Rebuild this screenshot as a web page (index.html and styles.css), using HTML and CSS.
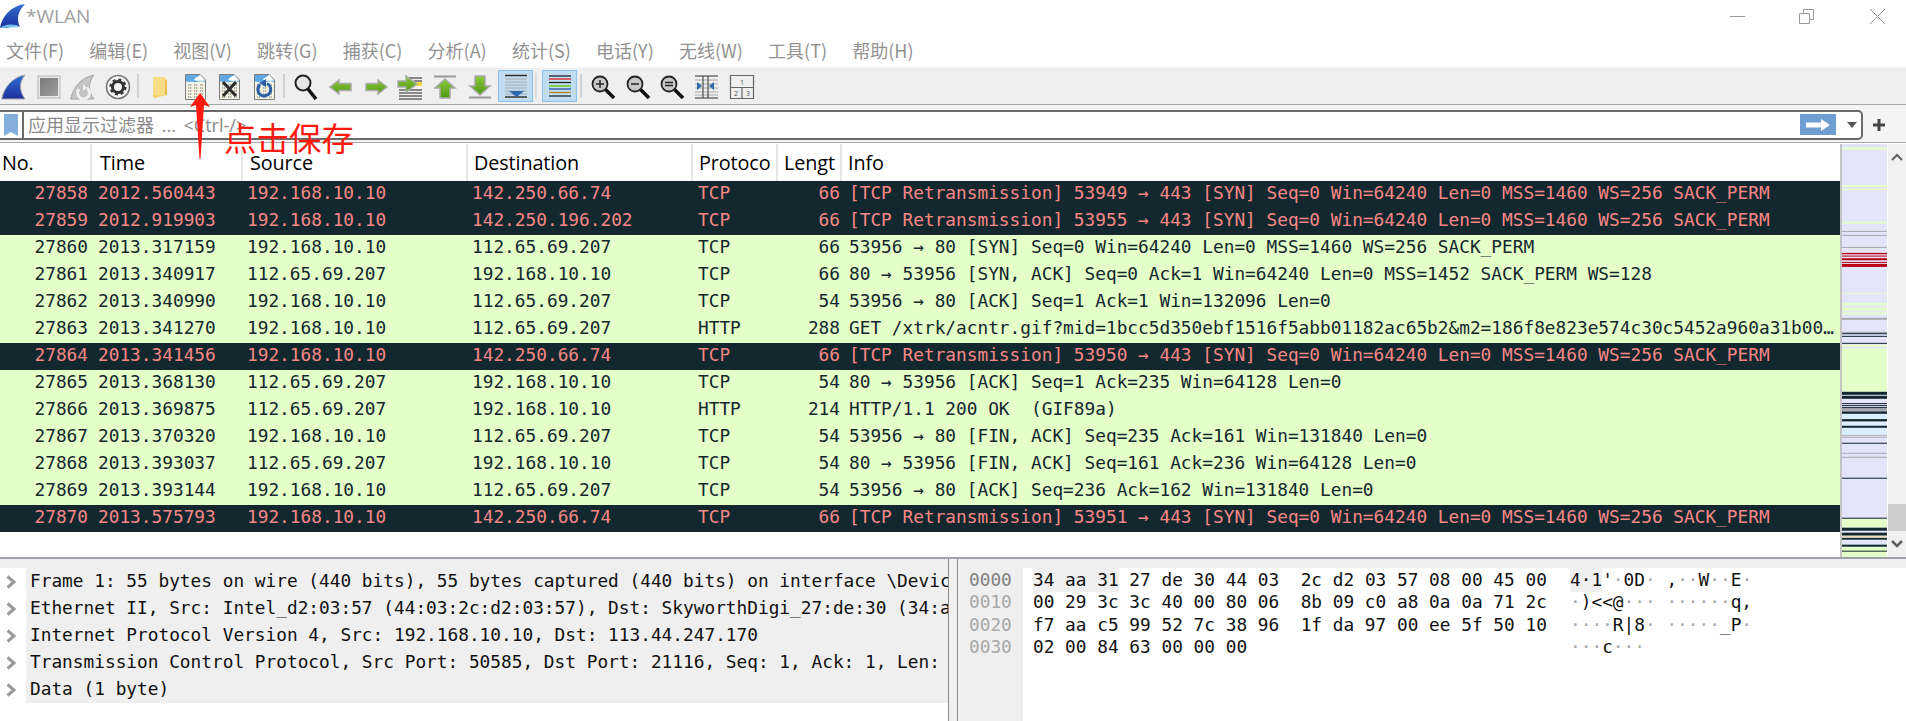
FILE: index.html
```html
<!DOCTYPE html>
<html lang="zh">
<head>
<meta charset="utf-8">
<title>*WLAN</title>
<link rel="stylesheet" href="styles.css">
</head>
<body>
<svg class="defs" width="0" height="0" aria-hidden="true">
  <defs>
    <linearGradient id="finblue" x1="0" y1="0" x2="0" y2="1"><stop offset="0" stop-color="#2f6fd0"/><stop offset="1" stop-color="#1d2f9e"/></linearGradient>
    <linearGradient id="stopg" x1="0" y1="0" x2="1" y2="1"><stop offset="0" stop-color="#7c7c7c"/><stop offset="1" stop-color="#9c9c9c"/></linearGradient>
    <linearGradient id="grn" x1="0" y1="0" x2="0" y2="1"><stop offset="0" stop-color="#8cc63f"/><stop offset="1" stop-color="#4f9a0e"/></linearGradient>
    <symbol id="doc" viewBox="0 0 26 26">
      <path d="M3.5 .5H18L23.5 6V25.500H3.500Z" fill="#f4f3e4" stroke="#7d7d7d"/>
      <path d="M4 1H17.500L23 6.500V8C18 6 15 9 12 8C9 7 6 9 4 7Z" fill="#5fa8e6"/>
      <path d="M12 6C13.500 3 16 3 18 1L23 6.500C19 7 15 7 12 6Z" fill="#fff"/>
      <path d="M6 11h4M12 11h4M18 11h3M6 14h4M12 14h4M18 14h3M6 17h4M12 17h4M18 17h3M6 20h4M12 20h4M18 20h3M6 23h4M12 23h4M18 23h3" stroke="#9a9a90" stroke-width="1.500" stroke-dasharray="1.300 .7"/>
    </symbol>
  </defs>
</svg>
<div class="app">
  <header class="titlebar">
    <svg class="appicon" viewBox="0 0 26 24"><path d="M25 0C11 2 2 12 0 24H8C11 21 16 20 20 23C16 15 18 7 25 0Z" fill="url(#finblue)"/><path d="M0 24C5 20 14 19 20 23Z" fill="#79c4ef"/></svg>
    <span class="wintitle">*WLAN</span>
    <span class="winctl">
      <svg class="ctl ctl-min" viewBox="0 0 15 15"><path d="M0 7.500H15" stroke="#999"/></svg>
      <svg class="ctl ctl-max" viewBox="0 0 15 15"><path d="M.5 4.500H10.500V14.500H.5ZM4.500 4V.5H14.500V10.500H11" fill="none" stroke="#999"/></svg>
      <svg class="ctl ctl-close" viewBox="0 0 15 15"><path d="M0 0L15 15M15 0L0 15" stroke="#999"/></svg>
    </span>
  </header>
  <nav class="menubar">
    <span>文件(F)</span><span>编辑(E)</span><span>视图(V)</span><span>跳转(G)</span><span>捕获(C)</span><span>分析(A)</span><span>统计(S)</span><span>电话(Y)</span><span>无线(W)</span><span>工具(T)</span><span>帮助(H)</span>
  </nav>
  <div class="toolbar">
    <svg class="ico" viewBox="0 0 26 26"><path d="M24 1C12 3 3 13 .7 25H24C18 17 18 8 24 1Z" fill="url(#finblue)" stroke="#a8a8a8"/></svg>
    <svg class="ico" viewBox="0 0 26 26"><rect x="2" y="2" width="22" height="22" fill="#e9e9e9" stroke="#b5b5b5"/><rect x="4" y="4" width="18" height="18" fill="url(#stopg)"/></svg>
    <svg class="ico" viewBox="0 0 26 26"><path d="M24 1C12 3 3 13 .7 25H24C18 17 18 8 24 1Z" fill="#c4c4c4" stroke="#a8a8a8"/><path d="M9 15A6 6 0 1 0 17 14" fill="none" stroke="#f1f1f1" stroke-width="3"/><path d="M13 10V17L17 14Z" fill="#f1f1f1"/></svg>
    <svg class="ico" viewBox="0 0 26 26"><circle cx="13" cy="13" r="11.500" fill="#f4f4f4" stroke="#777" stroke-width="1.600"/><circle cx="13" cy="13" r="5.500" fill="none" stroke="#333" stroke-width="3"/><circle cx="13" cy="13" r="7.500" fill="none" stroke="#333" stroke-width="2.200" stroke-dasharray="3 2.900"/></svg>
    <i class="sep"></i>
    <svg class="ico" viewBox="0 0 26 26"><path d="M6 3H17L20 6V21L7 24L6 22Z" fill="#f3d06a"/><path d="M6 3H18V21H6Z" fill="#f8dc85"/><path d="M18 6L20 7V21H18Z" fill="#e8bb4e"/></svg>
    <svg class="ico" viewBox="0 0 26 26"><use href="#doc"/></svg>
    <svg class="ico" viewBox="0 0 26 26"><use href="#doc"/><path d="M7 8L20 22M20 8L7 22" stroke="#2b2b2b" stroke-width="3"/></svg>
    <svg class="ico" viewBox="0 0 26 26"><use href="#doc"/><path d="M9 10.500A6.500 6.500 0 1 0 16 9.500" fill="none" stroke="#2a5fa8" stroke-width="3"/><path d="M15 5V13L8 9Z" fill="#2a5fa8"/></svg>
    <i class="sep"></i>
    <svg class="ico" viewBox="0 0 26 26"><path d="M15 15L23 25" stroke="#111" stroke-width="3.500"/><circle cx="10" cy="9" r="7.500" fill="#e5e5e5" stroke="#222" stroke-width="2"/></svg>
    <svg class="ico" viewBox="0 0 26 26"><path d="M2 13L11 6V9.500H23V16.500H11V20Z" fill="url(#grn)" stroke="#aaa" stroke-width="1.500"/></svg>
    <svg class="ico" viewBox="0 0 26 26"><path d="M24 13L15 6V9.500H3V16.500H15V20Z" fill="url(#grn)" stroke="#aaa" stroke-width="1.500"/></svg>
    <svg class="ico" viewBox="0 0 26 26"><path d="M12 4H25M17 7H25" stroke="#222" stroke-width="1.200"/><rect x="16" y="8" width="9" height="4" fill="#f5dc3c"/><path d="M2 16H25M2 19H25M2 22H25M2 25H25" stroke="#222" stroke-width="1.200"/><path d="M1 7H9V2L20 10L9 18V13H1Z" fill="url(#grn)" stroke="#aaa" stroke-width="1.500"/></svg>
    <svg class="ico" viewBox="0 0 26 26"><path d="M2 2.500H24" stroke="#999" stroke-width="2"/><path d="M13 5L23 14H18V24H8V14H3Z" fill="url(#grn)" stroke="#aaa" stroke-width="1.500"/></svg>
    <svg class="ico" viewBox="0 0 26 26"><path d="M2 23.500H24" stroke="#999" stroke-width="2"/><path d="M13 21L23 12H18V2H8V12H3Z" fill="url(#grn)" stroke="#aaa" stroke-width="1.500"/></svg>
    <span class="tbtn tbtn-scroll">
      <svg class="btnico" viewBox="0 0 24 24"><path d="M1 1.500H23M1 23H23" stroke="#333" stroke-width="1.300"/><path d="M1 5H23M1 8H23M1 11H23M1 14H23M1 17H23M1 20H23" stroke="#aaa"/><path d="M5 17H20L12.500 23Z" fill="#2f68ad"/></svg>
    </span>
    <i class="sep sep-a"></i>
    <span class="tbtn tbtn-color">
      <svg class="btnico" viewBox="0 0 24 24"><path d="M1 2H23" stroke="#222" stroke-width="1.300"/><path d="M1 5H23" stroke="#e02020" stroke-width="1.300"/><path d="M1 8.500H23" stroke="#222" stroke-width="1.300"/><path d="M1 12H23" stroke="#60c000" stroke-width="1.300"/><path d="M1 15H23" stroke="#2a4fa0" stroke-width="1.300"/><path d="M1 18.500H23" stroke="#b8860b" stroke-width="1.300"/><path d="M1 22H23" stroke="#222" stroke-width="1.300"/></svg>
    </span>
    <i class="sep sep-b"></i>
    <svg class="ico" viewBox="0 0 26 26"><path d="M15 15L24 24" stroke="#111" stroke-width="3.500"/><circle cx="10" cy="10" r="7.500" fill="#c8c8c8" stroke="#222" stroke-width="1.800"/><path d="M6 10H14M10 6V14" stroke="#222" stroke-width="1.500"/></svg>
    <svg class="ico" viewBox="0 0 26 26"><path d="M15 15L24 24" stroke="#111" stroke-width="3.500"/><circle cx="10" cy="10" r="7.500" fill="#c8c8c8" stroke="#222" stroke-width="1.800"/><path d="M6 10H14" stroke="#222" stroke-width="1.500"/></svg>
    <svg class="ico" viewBox="0 0 26 26"><path d="M15 15L24 24" stroke="#111" stroke-width="3.500"/><circle cx="10" cy="10" r="7.500" fill="#c8c8c8" stroke="#222" stroke-width="1.800"/><path d="M6 8.500H14M6 11.500H14" stroke="#222" stroke-width="1.500"/></svg>
    <svg class="ico" viewBox="0 0 26 26"><path d="M1 2H24M1 24H24" stroke="#333" stroke-width="1.200"/><path d="M1 6H24M1 10H24M1 14H24M1 18H24M1 21H24" stroke="#aaa"/><path d="M9 2V24M14 2V24" stroke="#333"/><path d="M3 8L8 12L3 16ZM20 8L15 12L20 16Z" fill="#2f68ad"/></svg>
    <svg class="ico" viewBox="0 0 26 26"><path d="M1.500 1.500H24.500V24.500H1.500ZM1.500 13.500H24.500M13 13.500V24.500" fill="none" stroke="#666" stroke-width="1.200"/><text class="paneno" x="13" y="10.500">1</text><text class="paneno" x="7" y="22">2</text><text class="paneno" x="19" y="22">3</text></svg>
  </div>
  <div class="filterbar">
    <div class="filterbox">
      <span class="bookmark"><svg viewBox="0 0 14 22" width="14" height="22"><path d="M0 0H14V22L7 18L0 22Z" fill="#84aedb"/></svg></span>
      <span class="placeholder">应用显示过滤器 ... &lt;Ctrl-/&gt;</span>
      <span class="applybtn"><svg viewBox="0 0 24 12" width="24" height="12"><path d="M0 3.500H15V0L24 6L15 12V8.500H0Z" fill="#fff"/></svg></span>
      <span class="caret"></span>
    </div>
    <svg class="plus" viewBox="0 0 14 14"><path d="M7 1V13M1 7H13" stroke="#444" stroke-width="3"/></svg>
  </div>
  <main class="packets">
    <div class="list">
      <div class="row head"><span class="c-no">No.</span><span class="c-time">Time</span><span class="c-src">Source</span><span class="c-dst">Destination</span><span class="c-proto">Protoco</span><span class="c-len">Lengt</span><span class="c-info">Info</span></div>
      <div class="row bad"><span class="c-no">27858</span><span class="c-time">2012.560443</span><span class="c-src">192.168.10.10</span><span class="c-dst">142.250.66.74</span><span class="c-proto">TCP</span><span class="c-len">66</span><span class="c-info">[TCP Retransmission] 53949 → 443 [SYN] Seq=0 Win=64240 Len=0 MSS=1460 WS=256 SACK_PERM</span></div>
      <div class="row bad"><span class="c-no">27859</span><span class="c-time">2012.919903</span><span class="c-src">192.168.10.10</span><span class="c-dst">142.250.196.202</span><span class="c-proto">TCP</span><span class="c-len">66</span><span class="c-info">[TCP Retransmission] 53955 → 443 [SYN] Seq=0 Win=64240 Len=0 MSS=1460 WS=256 SACK_PERM</span></div>
      <div class="row ok"><span class="c-no">27860</span><span class="c-time">2013.317159</span><span class="c-src">192.168.10.10</span><span class="c-dst">112.65.69.207</span><span class="c-proto">TCP</span><span class="c-len">66</span><span class="c-info">53956 → 80 [SYN] Seq=0 Win=64240 Len=0 MSS=1460 WS=256 SACK_PERM</span></div>
      <div class="row ok"><span class="c-no">27861</span><span class="c-time">2013.340917</span><span class="c-src">112.65.69.207</span><span class="c-dst">192.168.10.10</span><span class="c-proto">TCP</span><span class="c-len">66</span><span class="c-info">80 → 53956 [SYN, ACK] Seq=0 Ack=1 Win=64240 Len=0 MSS=1452 SACK_PERM WS=128</span></div>
      <div class="row ok"><span class="c-no">27862</span><span class="c-time">2013.340990</span><span class="c-src">192.168.10.10</span><span class="c-dst">112.65.69.207</span><span class="c-proto">TCP</span><span class="c-len">54</span><span class="c-info">53956 → 80 [ACK] Seq=1 Ack=1 Win=132096 Len=0</span></div>
      <div class="row ok"><span class="c-no">27863</span><span class="c-time">2013.341270</span><span class="c-src">192.168.10.10</span><span class="c-dst">112.65.69.207</span><span class="c-proto">HTTP</span><span class="c-len">288</span><span class="c-info">GET /xtrk/acntr.gif?mid=1bcc5d350ebf1516f5abb01182ac65b2&amp;m2=186f8e823e574c30c5452a960a31b00…</span></div>
      <div class="row bad"><span class="c-no">27864</span><span class="c-time">2013.341456</span><span class="c-src">192.168.10.10</span><span class="c-dst">142.250.66.74</span><span class="c-proto">TCP</span><span class="c-len">66</span><span class="c-info">[TCP Retransmission] 53950 → 443 [SYN] Seq=0 Win=64240 Len=0 MSS=1460 WS=256 SACK_PERM</span></div>
      <div class="row ok"><span class="c-no">27865</span><span class="c-time">2013.368130</span><span class="c-src">112.65.69.207</span><span class="c-dst">192.168.10.10</span><span class="c-proto">TCP</span><span class="c-len">54</span><span class="c-info">80 → 53956 [ACK] Seq=1 Ack=235 Win=64128 Len=0</span></div>
      <div class="row ok"><span class="c-no">27866</span><span class="c-time">2013.369875</span><span class="c-src">112.65.69.207</span><span class="c-dst">192.168.10.10</span><span class="c-proto">HTTP</span><span class="c-len">214</span><span class="c-info">HTTP/1.1 200 OK  (GIF89a)</span></div>
      <div class="row ok"><span class="c-no">27867</span><span class="c-time">2013.370320</span><span class="c-src">192.168.10.10</span><span class="c-dst">112.65.69.207</span><span class="c-proto">TCP</span><span class="c-len">54</span><span class="c-info">53956 → 80 [FIN, ACK] Seq=235 Ack=161 Win=131840 Len=0</span></div>
      <div class="row ok"><span class="c-no">27868</span><span class="c-time">2013.393037</span><span class="c-src">112.65.69.207</span><span class="c-dst">192.168.10.10</span><span class="c-proto">TCP</span><span class="c-len">54</span><span class="c-info">80 → 53956 [FIN, ACK] Seq=161 Ack=236 Win=64128 Len=0</span></div>
      <div class="row ok"><span class="c-no">27869</span><span class="c-time">2013.393144</span><span class="c-src">192.168.10.10</span><span class="c-dst">112.65.69.207</span><span class="c-proto">TCP</span><span class="c-len">54</span><span class="c-info">53956 → 80 [ACK] Seq=236 Ack=162 Win=131840 Len=0</span></div>
      <div class="row bad"><span class="c-no">27870</span><span class="c-time">2013.575793</span><span class="c-src">192.168.10.10</span><span class="c-dst">142.250.66.74</span><span class="c-proto">TCP</span><span class="c-len">66</span><span class="c-info">[TCP Retransmission] 53951 → 443 [SYN] Seq=0 Win=64240 Len=0 MSS=1460 WS=256 SACK_PERM</span></div>
    </div>
    <svg class="minimap" viewBox="0 12 136 1240" preserveAspectRatio="none">
      <rect y="12" width="136" height="1240" fill="#e4e4fb"/>
      <g fill="#e4ffc7"><rect y="22" width="136" height="7"/><rect y="135" width="136" height="6"/><rect y="147" width="136" height="3"/><rect y="245" width="136" height="6"/><rect y="459" width="136" height="3"/><rect y="489" width="136" height="8"/><rect y="503" width="136" height="10"/><rect y="518" width="136" height="6"/><rect y="615" width="136" height="6"/><rect y="626" width="136" height="130"/><rect y="1137" width="136" height="27"/><rect y="1221" width="136" height="31"/></g>
      <g fill="#a8a8b0"><rect y="273" width="136" height="3"/><rect y="285" width="136" height="3"/><rect y="321" width="136" height="3"/><rect y="534" width="136" height="6"/><rect y="576" width="136" height="4"/><rect y="805" width="136" height="10"/><rect y="844" width="136" height="3"/><rect y="885" width="136" height="3"/><rect y="891" width="136" height="3"/><rect y="939" width="136" height="3"/><rect y="951" width="136" height="3"/></g>
      <g fill="#b80010"><rect y="339" width="136" height="4"/><rect y="347" width="136" height="3"/><rect y="355" width="136" height="6"/><rect y="366" width="136" height="3"/><rect y="372" width="136" height="9"/></g>
      <g fill="#daeeff"><rect y="822" width="136" height="16"/><rect y="847" width="136" height="11"/><rect y="864" width="136" height="21"/></g>
      <g fill="#12272e"><rect y="580" width="136" height="3"/><rect y="588" width="136" height="3"/><rect y="609" width="136" height="3"/><rect y="756" width="136" height="9"/><rect y="768" width="136" height="9"/><rect y="790" width="136" height="3"/><rect y="796" width="136" height="3"/><rect y="802" width="136" height="3"/><rect y="815" width="136" height="7"/><rect y="838" width="136" height="6"/><rect y="858" width="136" height="6"/><rect y="909" width="136" height="3"/><rect y="1014" width="136" height="3"/><rect y="1134" width="136" height="3"/><rect y="1164" width="136" height="9"/><rect y="1179" width="136" height="9"/><rect y="1194" width="136" height="6"/><rect y="1215" width="136" height="6"/><rect y="1233" width="136" height="3"/></g>
      <rect y="1188" width="136" height="6" fill="#e8dcc0"/>
    </svg>
    <div class="vscroll">
      <svg class="sarrow" viewBox="0 0 18 10"><path d="M4 8L9 3L14 8" fill="none" stroke="#606060" stroke-width="2"/></svg>
      <span class="strack"><span class="thumb"></span></span>
      <svg class="sarrow" viewBox="0 0 18 10"><path d="M4 2L9 7L14 2" fill="none" stroke="#606060" stroke-width="2.500"/></svg>
    </div>
  </main>
  <section class="bottom">
    <div class="details">
      <div class="dline"><svg class="chev" viewBox="0 0 10 14"><path d="M1.500 1.500L8 7L1.500 12.500" fill="none" stroke="#9a9a9a" stroke-width="3"/></svg><span class="dtext">Frame 1: 55 bytes on wire (440 bits), 55 bytes captured (440 bits) on interface \Devic</span></div>
      <div class="dline"><svg class="chev" viewBox="0 0 10 14"><path d="M1.500 1.500L8 7L1.500 12.500" fill="none" stroke="#9a9a9a" stroke-width="3"/></svg><span class="dtext">Ethernet II, Src: Intel_d2:03:57 (44:03:2c:d2:03:57), Dst: SkyworthDigi_27:de:30 (34:a</span></div>
      <div class="dline"><svg class="chev" viewBox="0 0 10 14"><path d="M1.500 1.500L8 7L1.500 12.500" fill="none" stroke="#9a9a9a" stroke-width="3"/></svg><span class="dtext">Internet Protocol Version 4, Src: 192.168.10.10, Dst: 113.44.247.170</span></div>
      <div class="dline"><svg class="chev" viewBox="0 0 10 14"><path d="M1.500 1.500L8 7L1.500 12.500" fill="none" stroke="#9a9a9a" stroke-width="3"/></svg><span class="dtext">Transmission Control Protocol, Src Port: 50585, Dst Port: 21116, Seq: 1, Ack: 1, Len:</span></div>
      <div class="dline"><svg class="chev" viewBox="0 0 10 14"><path d="M1.500 1.500L8 7L1.500 12.500" fill="none" stroke="#9a9a9a" stroke-width="3"/></svg><span class="dtext">Data (1 byte)</span></div>
    </div>
    <div class="splitter"></div>
    <div class="hexpane">
      <div class="offsets"><div class="off-sel">0000</div><div>0010</div><div>0020</div><div>0030</div></div>
      <div class="hex"><div><span class="sel">34 aa 31</span> 27 de 30 44 03  2c d2 03 57 08 00 45 00</div><div>00 29 3c 3c 40 00 80 06  8b 09 c0 a8 0a 0a 71 2c</div><div>f7 aa c5 99 52 7c 38 96  1f da 97 00 ee 5f 50 10</div><div>02 00 84 63 00 00 00</div></div>
      <div class="ascii"><div><span class="sel">4·1</span>'<b>·</b>0D<b>·</b> ,<b>··</b>W<b>··</b>E<b>·</b></div><div><b>·</b>)&lt;&lt;@<b>···</b> <b>······</b>q,</div><div><b>····</b>R|8<b>·</b> <b>·····</b>_P<b>·</b></div><div><b>···</b>c<b>···</b></div></div>
    </div>
  </section>
  <div class="note">点击保存</div>
  <svg class="redarrow" viewBox="0 0 24 68"><path d="M12 0L22 14L16 12L12.500 66H11.500L8 12L2 14Z" fill="#ff1a10"/></svg>
</div>
</body>
</html>
```
FILE: styles.css
```css
* { box-sizing: border-box; }
html, body { margin: 0; padding: 0; background: #fff; }
body { width: 1906px; height: 721px; overflow: hidden; font-family: "Open Sans", "Noto Sans CJK SC", sans-serif; }
.defs { display: block; height: 0; }
.app { position: relative; width: 1906px; height: 721px; display: flex; flex-direction: column; overflow: hidden; }

.titlebar { height: 38px; flex: none; display: flex; align-items: center; }
.appicon { width: 26px; height: 24px; flex: none; margin-top: -6px; }
.wintitle { font-size: 19px; color: #a0a0a0; margin-top: -7px; }
.winctl { margin-left: auto; display: flex; align-items: center; margin-top: -6px; padding-right: 21px; }
.ctl { width: 15px; height: 15px; display: block; }
.ctl-max { margin-left: 54px; }
.ctl-close { margin-left: 56px; }

.menubar { height: 28px; flex: none; display: flex; gap: 25.200px; padding: 0 0 5px 6px; align-items: center; font-family: "Noto Sans CJK SC", sans-serif; font-size: 18px; color: #929292; white-space: nowrap; }

.toolbar { height: 39px; flex: none; display: flex; align-items: center; background: #efefef; border-top: 2px solid #fafafa; border-bottom: 1px solid #a6a6a6; padding-left: 1px; }
.ico { width: 26px; height: 26px; margin: 2px 8.7px 0 0; flex: none; }
.sep { width: 2px; height: 24px; background: #d0d0d0; margin: 0 8px 0 -2.7px; flex: none; }
.sep-a { margin: 0 0 0 2px; height: 26px; background: #dcdcdc; }
.sep-b { margin: 0 8px 0 3px; }
.tbtn { width: 35px; height: 32px; background: #bfdcf3; border: 1px solid #8cc0ef; display: flex; align-items: center; justify-content: center; flex: none; }
.tbtn-scroll { margin-left: -3.2px; }
.tbtn-color { margin-left: 5px; }
.btnico { width: 24px; height: 24px; display: block; }
.paneno { font-family: "Open Sans", sans-serif; font-size: 7px; fill: #555; text-anchor: middle; }

.filterbar { height: 38px; flex: none; display: flex; align-items: center; background: #f4f4f4; border-bottom: 1px solid #a8a8a8; padding-top: 2px; }
.filterbox { width: 1864px; height: 30px; margin-left: -1px; background: #fff; border: 2px solid #6a6a6a; border-left: 0; border-radius: 0 5px 5px 0; display: flex; align-items: center; }
.bookmark { width: 25px; height: 100%; flex: none; display: flex; align-items: center; justify-content: center; padding-left: 1px; border-right: 2px solid #6a6a6a; }
.placeholder { margin: -2px 0 0 4px; font-family: "Open Sans", "Noto Sans CJK SC", sans-serif; font-size: 18px; word-spacing: 3px; color: #8a8a8a; white-space: nowrap; }
.applybtn { margin-left: auto; width: 36px; height: 21px; background: #6f9fd2; display: flex; align-items: center; justify-content: center; flex: none; }
.caret { width: 0; height: 0; margin: 0 4px 0 11px; border-style: solid; border-width: 6px 5px 0; border-color: #555 transparent transparent; flex: none; }
.plus { width: 14px; height: 14px; margin-left: 9px; flex: none; }

.packets { height: 416px; flex: none; display: flex; border-bottom: 2px solid #a0a0a8; padding-top: 1px; }
.list { width: 1842px; flex: none; font-family: "DejaVu Sans Mono", monospace; font-size: 17.800px; border-right: 2px solid #c4c4c4; }
.row { height: 27px; line-height: 24px; display: grid; grid-template-columns: 88px 155px 225px 225px 85px 64px 1fr; white-space: pre; }
.row span { overflow: hidden; }
.bad { background: #12272e; color: #f78787; }
.ok { background: #e4ffc7; color: #12272e; }
.c-no { text-align: right; }
.c-time { padding-left: 10px; }
.c-src { padding-left: 4px; }
.c-dst { padding-left: 4px; }
.c-proto { padding-left: 5px; }
.c-len { text-align: right; padding-right: 2px; }
.c-info { padding-left: 7px; }
.head { height: 37px; line-height: 37px; background: #fff; color: #000; font-family: "Open Sans", sans-serif; font-size: 19.800px; letter-spacing: -.1px; }
.head span { border-right: 2px solid #e6e6e6; }
.head .c-no { padding-left: 2px; width: 92px; text-align: left; }
.head .c-time { padding-left: 8px; margin-left: 4px; }
.head .c-src { padding-left: 7px; }
.head .c-dst { padding-left: 6px; }
.head .c-proto { padding-left: 6px; }
.head .c-len { padding: 0 0 0 6px; text-align: left; }
.head .c-info { padding-left: 6px; border-right: 0; }
.minimap { width: 45px; height: 413px; flex: none; display: block; }
.vscroll { width: 19px; flex: none; background: #f0f0f0; display: flex; flex-direction: column; border-left: 1px solid #fff; }
.sarrow { width: 18px; height: 10px; display: block; flex: none; margin: 8px 0 8px; }
.strack { flex: 1; display: flex; flex-direction: column; justify-content: flex-end; }
.thumb { height: 27px; background: #cdcdcd; display: block; }

.bottom { flex: 1; display: flex; font-family: "DejaVu Sans Mono", monospace; font-size: 17.800px; color: #111; padding-top: 9px; background: linear-gradient(#efefef 9px, #fff 9px); min-height: 0; }
.details { width: 948px; flex: none; }
.dline { height: 27px; line-height: 26px; display: flex; align-items: center; white-space: pre; overflow: hidden; }
.chev { width: 10px; height: 14px; margin: 0 10px 0 6px; flex: none; }
.dtext { flex: 1; background: #efefef; padding-left: 4px; overflow: hidden; height: 27px; }
.splitter { width: 10px; flex: none; margin-top: -9px; border-left: 1px solid #8a8a8a; border-right: 1px solid #8a8a8a; background: #efefef; }
.hexpane { flex: 1; display: flex; line-height: 22.300px; white-space: pre; }
.offsets { width: 65px; flex: none; background: #efefef; padding: 1px 0 0 11px; color: #a8a8a8; }
.off-sel { color: #808080; }
.hex { width: 547px; flex: none; padding: 1px 0 0 10px; }
.ascii { padding-top: 1px; }
.ascii b { font-weight: normal; color: #a8a8a8; }
.sel { background: #efefef; padding: 2px 0; }

.note { position: absolute; left: 224px; top: 117px; font-family: "Noto Sans CJK SC", sans-serif; font-size: 32.500px; line-height: 40px; color: #ff1a10; white-space: nowrap; }
.redarrow { position: absolute; left: 188px; top: 93px; width: 24px; height: 68px; }
```
